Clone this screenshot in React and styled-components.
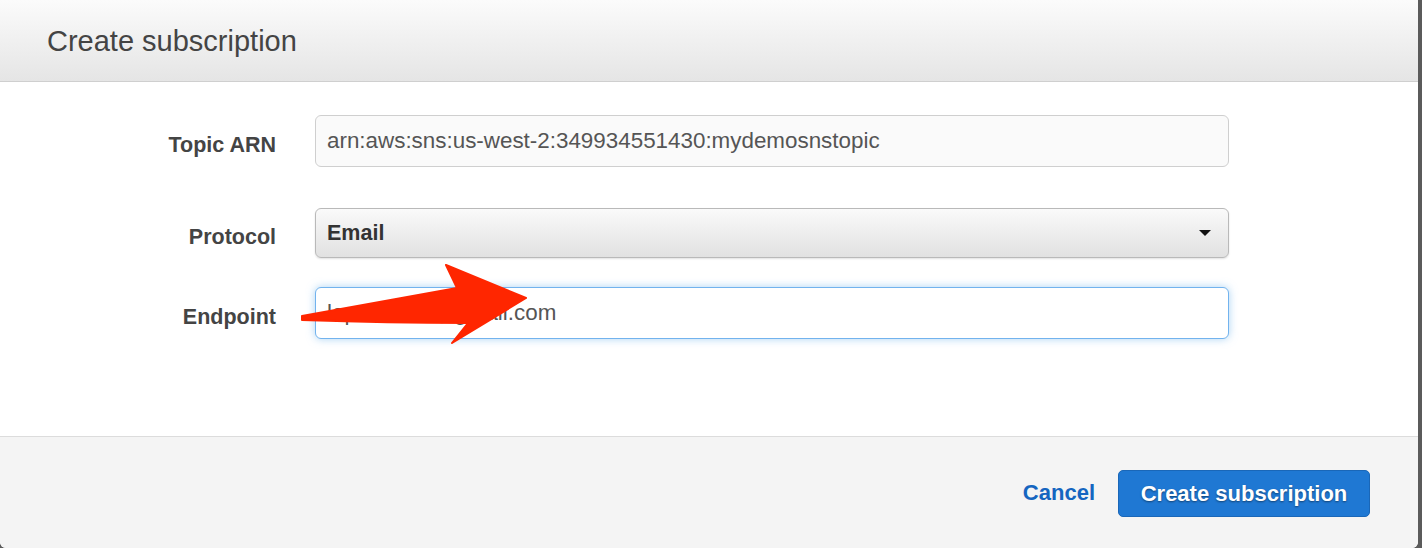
import React from 'react';
import styled, { createGlobalStyle } from 'styled-components';

const GlobalStyle = createGlobalStyle`
    html, body {
        margin: 0;
        padding: 0;
        background: #5b5b5b;
        font-family: 'Liberation Sans', Arial, Helvetica, sans-serif;
    }
`

const fields = [
    { label: 'Topic ARN', kind: 'readonly', value: 'arn:aws:sns:us-west-2:349934551430:mydemosnstopic', top: 33 },
    { label: 'Protocol', kind: 'select', value: 'Email', top: 41 },
    { label: 'Endpoint', kind: 'focus', value: 'laprashant@gmail.com', top: 29 },
];

export default function App() {
    return (
        <>
            <GlobalStyle />
            <Modal>
                <Header>
                    <Title>Create subscription</Title>
                </Header>
                <Body>
                    {fields.map(f => (
                        <Row key={f.label} $top={f.top}>
                            <Label>{f.label}</Label>
                            {f.kind === 'select' ? (
                                <Select>
                                    <SelectValue>{f.value}</SelectValue>
                                    <Caret />
                                </Select>
                            ) : (
                                <Input $focused={f.kind === 'focus'}>{f.value}</Input>
                            )}
                        </Row>
                    ))}
                </Body>
                <Footer>
                    <CancelLink>Cancel</CancelLink>
                    <PrimaryButton>Create subscription</PrimaryButton>
                </Footer>
                <Arrow viewBox="0 0 1418 548" width="1418" height="548">
                    <path
                        d="M302,316 Q385,301 457,288 L446,265 L526,298 L452,343 L468,323 Q390,323 302,320 Z"
                        fill="#ff2600"
                        stroke="#ff2600"
                        strokeWidth="2"
                        strokeLinejoin="round"
                    />
                </Arrow>
            </Modal>
        </>
    )
}

const Modal = styled.div`
    position: relative;
    width: 1418px;
    height: 548px;
    display: flex;
    flex-direction: column;
    background: #fff;
    border-radius: 0 0 6px 6px;
    overflow: hidden;
`

const Header = styled.div`
    height: 81px;
    flex: none;
    border-bottom: 1px solid #cfcfcf;
    background: linear-gradient(to bottom, #fbfbfb 0%, #e5e5e5 100%);
    display: flex;
    align-items: center;
    padding-left: 47px;
`

const Title = styled.h1`
    margin: 0;
    margin-top: 2px;
    font-size: 29px;
    font-weight: normal;
    color: #444;
`

const Body = styled.div`
    flex: 1;
    background: #fff;
`

const Row = styled.div`
    display: grid;
    grid-template-columns: 276px 914px;
    column-gap: 39px;
    align-items: center;
    margin-top: ${p => p.$top}px;
`

const Label = styled.div`
    text-align: right;
    font-size: 21.5px;
    font-weight: bold;
    color: #444;
    padding-top: 8px;
`

const Input = styled.div`
    box-sizing: border-box;
    height: 52px;
    padding: 0 11px;
    display: flex;
    align-items: center;
    font-size: 22.4px;
    color: #555;
    border-radius: 6px;
    background: ${p => p.$focused ? '#fff' : '#fafafa'};
    border: 1px solid ${p => p.$focused ? '#72b3ee' : '#cfcfcf'};
    box-shadow: ${p => p.$focused ? '0 0 8px rgba(102, 175, 233, 0.55)' : 'none'};
`

const Select = styled.div`
    box-sizing: border-box;
    height: 50px;
    padding: 0 17px 0 11px;
    display: flex;
    align-items: center;
    justify-content: space-between;
    border-radius: 6px;
    border: 1px solid #b9b9b9;
    background: linear-gradient(to bottom, #fafafa 0%, #e1e1e1 100%);
    box-shadow: 0 1px 2px rgba(0, 0, 0, 0.12);
`

const SelectValue = styled.span`
    font-size: 21.5px;
    font-weight: bold;
    color: #333;
`

const Caret = styled.span`
    width: 0;
    height: 0;
    border-left: 6px solid transparent;
    border-right: 6px solid transparent;
    border-top: 6px solid #111;
`

const Footer = styled.div`
    height: 112px;
    flex: none;
    box-sizing: border-box;
    border-top: 1px solid #dcdcdc;
    background: #f4f4f4;
    display: flex;
    justify-content: flex-end;
    align-items: flex-start;
    padding: 33px 48px 0 0;
    gap: 23px;
`

const CancelLink = styled.a`
    font-size: 22px;
    font-weight: bold;
    color: #1565c0;
    line-height: 45px;
    cursor: pointer;
`

const PrimaryButton = styled.button`
    box-sizing: border-box;
    height: 47px;
    width: 252px;
    border-radius: 5px;
    border: 1px solid #1a67b8;
    background: #1f78d3;
    color: #fff;
    font-family: inherit;
    font-size: 22px;
    font-weight: bold;
    text-shadow: 0 1px 2px rgba(0, 0, 0, 0.45);
    cursor: pointer;
`

const Arrow = styled.svg`
    position: absolute;
    top: 0;
    left: 0;
    pointer-events: none;
`
